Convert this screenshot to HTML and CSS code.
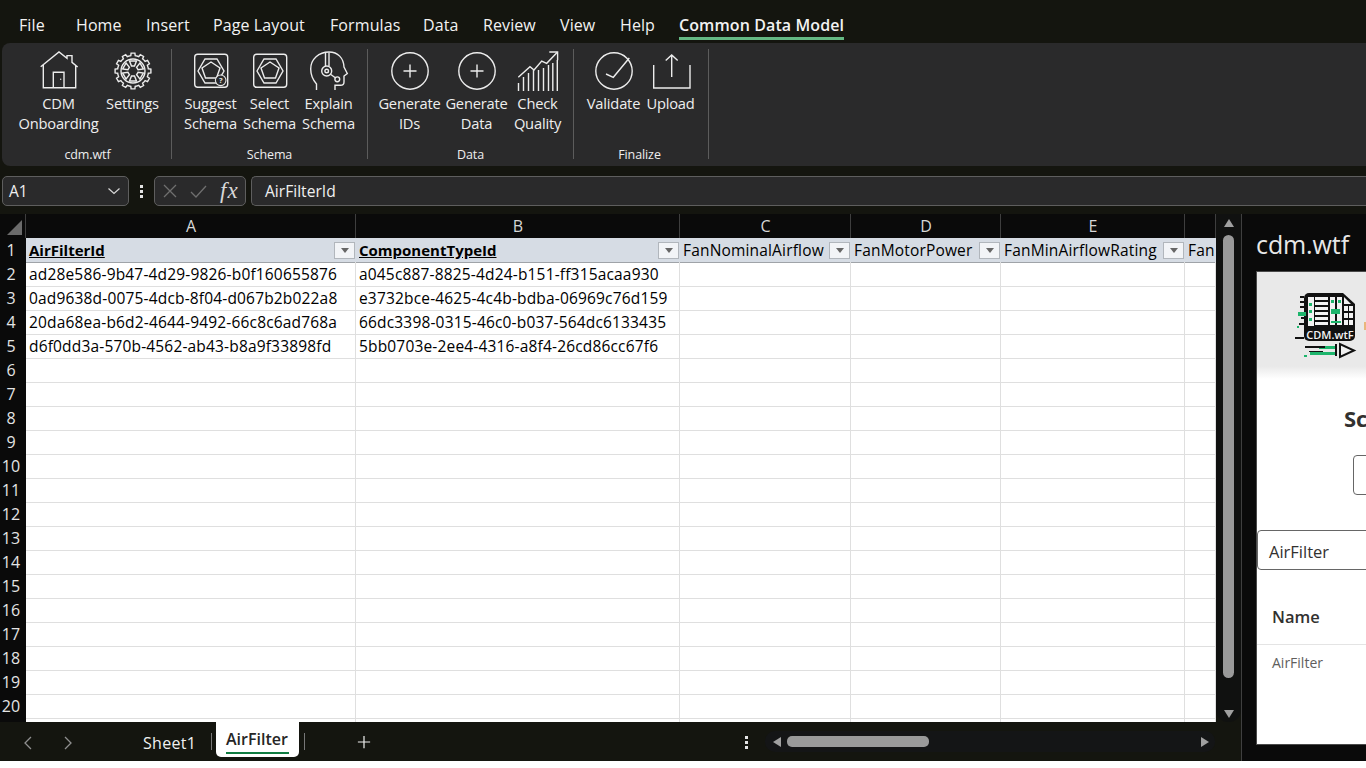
FILE: index.html
```html
<!DOCTYPE html>
<html lang="en">
<head>
<meta charset="utf-8">
<title>AirFilter - Excel</title>
<link rel="stylesheet" href="styles.css">
</head>
<body>
<div class="app">
  <nav class="tabs">
    <span class="tab t-file">File</span>
    <span class="tab t-home">Home</span>
    <span class="tab t-ins">Insert</span>
    <span class="tab t-pl">Page Layout</span>
    <span class="tab t-form">Formulas</span>
    <span class="tab t-data">Data</span>
    <span class="tab t-rev">Review</span>
    <span class="tab t-view">View</span>
    <span class="tab t-help">Help</span>
    <span class="tab active">Common Data Model</span>
  </nav>

  <section class="ribbon">
    <div class="group g1">
      <div class="btns">
        <div class="btn w90">
          <svg class="ico" viewBox="0 0 44 44"><path d="M3.7 16.7 22 2l8 6.4V5.6h5v6.8l5.7 4.6M6.3 15v22.7h32.4V15"/><path d="M16.3 37.7V22.3H27v15.4"/><circle class="dot" cx="23.7" cy="29.3" r=".7"/></svg>
          <span>CDM<br>Onboarding</span>
        </div>
        <div class="btn w58">
          <svg class="ico" viewBox="0 0 44 44">
            <defs>
              <path id="tooth" d="M18 6l1.8-.3.3-2.6h3.8l.3 2.6 1.8.3"/>
              <path id="wedge" d="M18.5 11h7l-2 5h-3z"/>
            </defs>
            <use href="#tooth"/><use href="#tooth" transform="rotate(30 22 21)"/><use href="#tooth" transform="rotate(60 22 21)"/><use href="#tooth" transform="rotate(90 22 21)"/><use href="#tooth" transform="rotate(120 22 21)"/><use href="#tooth" transform="rotate(150 22 21)"/><use href="#tooth" transform="rotate(180 22 21)"/><use href="#tooth" transform="rotate(210 22 21)"/><use href="#tooth" transform="rotate(240 22 21)"/><use href="#tooth" transform="rotate(270 22 21)"/><use href="#tooth" transform="rotate(300 22 21)"/><use href="#tooth" transform="rotate(330 22 21)"/>
            <circle cx="22" cy="21" r="12"/>
            <use href="#wedge"/><use href="#wedge" transform="rotate(60 22 21)"/><use href="#wedge" transform="rotate(120 22 21)"/><use href="#wedge" transform="rotate(180 22 21)"/><use href="#wedge" transform="rotate(240 22 21)"/><use href="#wedge" transform="rotate(300 22 21)"/>
          </svg>
          <span>Settings</span>
        </div>
      </div>
      <div class="glabel">cdm.wtf</div>
    </div>

    <div class="group g2">
      <div class="btns">
        <div class="btn w59">
          <svg class="ico" viewBox="0 0 44 44"><rect x="5.7" y="4.3" width="33" height="33" rx="3"/><path d="M9 21l7-12h12l7 12-7 12H16z"/><path d="M22 12l9 6-3.500 10h-11L13 18z"/><circle class="badge" cx="31.700" cy="30.300" r="5.300"/><text class="q" x="31.700" y="33.200">?</text></svg>
          <span>Suggest<br>Schema</span>
        </div>
        <div class="btn w59">
          <svg class="ico" viewBox="0 0 44 44"><rect x="5.700" y="4.300" width="33" height="33" rx="3"/><path d="M9 21l7-12h12l7 12-7 12H16z"/><path d="M22 12l9 6-3.500 10h-11L13 18z"/></svg>
          <span>Select<br>Schema</span>
        </div>
        <div class="btn w59">
          <svg class="ico" viewBox="0 0 44 44"><path d="M9.500 40v-6C6 30 3.700 25 3.700 19 3.700 9 12 2 22 2c9 0 14.500 6 15 15l3.300 6.500-3.300 2.500v6c0 2-1.500 3.300-3.500 3.300H28V40"/><path d="M18.500 2.500V16M22 2.500V16"/><circle cx="19.700" cy="21" r="5"/><circle cx="19.700" cy="21" r="1.800"/><path d="M23.500 24.300l4.800 3.400"/><circle cx="30.300" cy="29.300" r="2.400"/></svg>
          <span>Explain<br>Schema</span>
        </div>
      </div>
      <div class="glabel">Schema</div>
    </div>

    <div class="group g3">
      <div class="btns">
        <div class="btn w67">
          <svg class="ico" viewBox="0 0 44 44"><circle cx="22" cy="21" r="18.200"/><path d="M22 14.500v13M15.500 21h13"/></svg>
          <span>Generate<br>IDs</span>
        </div>
        <div class="btn w67">
          <svg class="ico" viewBox="0 0 44 44"><circle cx="22" cy="21" r="18.200"/><path d="M22 14.500v13M15.500 21h13"/></svg>
          <span>Generate<br>Data</span>
        </div>
        <div class="btn w55">
          <svg class="ico" viewBox="0 0 44 44"><path d="M2.500 41V33M7.500 41V27M12.500 41V23M17.500 41V20M22.500 41V20M27.500 41V18M32.500 41V15M36.800 41V13M41.300 41V10"/><path d="M2.300 27.300 14 16.700l4 3.300 7.700-9 5 2.300L41.300 2.300"/><path d="M33.300 2h8.300v8.300"/></svg>
          <span>Check<br>Quality</span>
        </div>
      </div>
      <div class="glabel">Data</div>
    </div>

    <div class="group g4">
      <div class="btns">
        <div class="btn w62">
          <svg class="ico" viewBox="0 0 44 44"><circle cx="22" cy="21" r="18.200"/><path d="M14 24l7.300 3.300L37.300 8"/></svg>
          <span>Validate</span>
        </div>
        <div class="btn w52">
          <svg class="ico" viewBox="0 0 44 44"><path d="M4.700 15v23h36.300V15"/><path d="M22.700 27V5.500M16.700 10.500l6-5.500 6 5.500"/></svg>
          <span>Upload</span>
        </div>
      </div>
      <div class="glabel">Finalize</div>
    </div>
  </section>

  <section class="fbar">
    <div class="namebox"><span>A1</span>
      <svg class="chev" viewBox="0 0 14 8"><path d="M1.500 1.500 7 6.500l5.500-5"/></svg>
    </div>
    <div class="vdots"><i></i><i></i><i></i></div>
    <div class="fxbox">
      <svg class="fxmark" viewBox="0 0 16 16"><path d="M2 2l12 12M14 2 2 14"/></svg>
      <svg class="fxmark" viewBox="0 0 18 16"><path d="M2 9l5 5L17 3"/></svg>
      <span class="fx">fx</span>
    </div>
    <div class="formula">AirFilterId</div>
  </section>

  <section class="workspace">
    <div class="sheetside">
      <div class="sheetrow">
        <div class="sheet">
          <div class="row colhead">
            <div class="corner"><i></i></div><div class="ch">A</div><div class="ch">B</div><div class="ch">C</div><div class="ch">D</div><div class="ch">E</div><div class="ch"></div>
          </div>
          <div class="row tbl">
            <div class="rh">1</div>
            <div class="c th b"><span>AirFilterId</span><i class="flt"></i></div>
            <div class="c th b"><span>ComponentTypeId</span><i class="flt"></i></div>
            <div class="c th"><span>FanNominalAirflow</span><i class="flt"></i></div>
            <div class="c th"><span>FanMotorPower</span><i class="flt"></i></div>
            <div class="c th"><span>FanMinAirflowRating</span><i class="flt"></i></div>
            <div class="c th"><span>Fan</span></div>
          </div>
          <div class="row"><div class="rh">2</div><div class="c">ad28e586-9b47-4d29-9826-b0f160655876</div><div class="c">a045c887-8825-4d24-b151-ff315acaa930</div><div class="c"></div><div class="c"></div><div class="c"></div><div class="c"></div></div>
          <div class="row"><div class="rh">3</div><div class="c">0ad9638d-0075-4dcb-8f04-d067b2b022a8</div><div class="c">e3732bce-4625-4c4b-bdba-06969c76d159</div><div class="c"></div><div class="c"></div><div class="c"></div><div class="c"></div></div>
          <div class="row"><div class="rh">4</div><div class="c">20da68ea-b6d2-4644-9492-66c8c6ad768a</div><div class="c">66dc3398-0315-46c0-b037-564dc6133435</div><div class="c"></div><div class="c"></div><div class="c"></div><div class="c"></div></div>
          <div class="row"><div class="rh">5</div><div class="c">d6f0dd3a-570b-4562-ab43-b8a9f33898fd</div><div class="c">5bb0703e-2ee4-4316-a8f4-26cd86cc67f6</div><div class="c"></div><div class="c"></div><div class="c"></div><div class="c"></div></div>
          <div class="row"><div class="rh">6</div><div class="c"></div><div class="c"></div><div class="c"></div><div class="c"></div><div class="c"></div><div class="c"></div></div>
          <div class="row"><div class="rh">7</div><div class="c"></div><div class="c"></div><div class="c"></div><div class="c"></div><div class="c"></div><div class="c"></div></div>
          <div class="row"><div class="rh">8</div><div class="c"></div><div class="c"></div><div class="c"></div><div class="c"></div><div class="c"></div><div class="c"></div></div>
          <div class="row"><div class="rh">9</div><div class="c"></div><div class="c"></div><div class="c"></div><div class="c"></div><div class="c"></div><div class="c"></div></div>
          <div class="row"><div class="rh">10</div><div class="c"></div><div class="c"></div><div class="c"></div><div class="c"></div><div class="c"></div><div class="c"></div></div>
          <div class="row"><div class="rh">11</div><div class="c"></div><div class="c"></div><div class="c"></div><div class="c"></div><div class="c"></div><div class="c"></div></div>
          <div class="row"><div class="rh">12</div><div class="c"></div><div class="c"></div><div class="c"></div><div class="c"></div><div class="c"></div><div class="c"></div></div>
          <div class="row"><div class="rh">13</div><div class="c"></div><div class="c"></div><div class="c"></div><div class="c"></div><div class="c"></div><div class="c"></div></div>
          <div class="row"><div class="rh">14</div><div class="c"></div><div class="c"></div><div class="c"></div><div class="c"></div><div class="c"></div><div class="c"></div></div>
          <div class="row"><div class="rh">15</div><div class="c"></div><div class="c"></div><div class="c"></div><div class="c"></div><div class="c"></div><div class="c"></div></div>
          <div class="row"><div class="rh">16</div><div class="c"></div><div class="c"></div><div class="c"></div><div class="c"></div><div class="c"></div><div class="c"></div></div>
          <div class="row"><div class="rh">17</div><div class="c"></div><div class="c"></div><div class="c"></div><div class="c"></div><div class="c"></div><div class="c"></div></div>
          <div class="row"><div class="rh">18</div><div class="c"></div><div class="c"></div><div class="c"></div><div class="c"></div><div class="c"></div><div class="c"></div></div>
          <div class="row"><div class="rh">19</div><div class="c"></div><div class="c"></div><div class="c"></div><div class="c"></div><div class="c"></div><div class="c"></div></div>
          <div class="row"><div class="rh">20</div><div class="c"></div><div class="c"></div><div class="c"></div><div class="c"></div><div class="c"></div><div class="c"></div></div>
          <div class="row"><div class="rh"></div><div class="c"></div><div class="c"></div><div class="c"></div><div class="c"></div><div class="c"></div><div class="c"></div></div>
        </div>
        <div class="vscroll">
          <i class="tri up"></i>
          <div class="vthumb"></div>
          <i class="tri down"></i>
        </div>
      </div>
      <div class="sheetbar">
        <div class="navs">
          <svg viewBox="0 0 10 16"><path d="M8 2 2 8l6 6"/></svg>
          <svg viewBox="0 0 10 16"><path d="M2 2l6 6-6 6"/></svg>
        </div>
        <span class="sheet1">Sheet1</span>
        <i class="sep"></i>
        <div class="curtab"><span>AirFilter</span></div>
        <i class="sep"></i>
        <svg class="plus" viewBox="0 0 16 16"><path d="M8 1v14M1 8h14"/></svg>
        <div class="vdots small"><i></i><i></i><i></i></div>
        <div class="hscroll">
          <i class="tri left"></i>
          <div class="hthumb"></div>
          <i class="tri right"></i>
        </div>
      </div>
    </div>

    <aside class="pane">
      <h1 class="pane-title">cdm.wtf</h1>
      <div class="card">
        <div class="card-head">
          <svg class="logo" viewBox="0 0 62 66">
            <path class="lg-dark" d="M14 0H48L60 11V43a5 5 0 0 1-5 5H14a5 5 0 0 1-5-5V5a5 5 0 0 1 5-5z"/>
            <g class="lg-white">
              <rect x="13" y="4" width="6" height="29"/><rect x="20" y="4" width="13" height="3"/><rect x="20" y="9" width="13" height="3"/><rect x="20" y="14" width="13" height="3"/><rect x="20" y="19" width="13" height="3"/><rect x="20" y="24" width="13" height="3"/><rect x="20" y="29" width="13" height="3"/>
              <rect x="35" y="4" width="5" height="28"/><rect x="42" y="4" width="5" height="28"/>
              <path d="M49 4l7 7h-7z"/>
              <rect x="49" y="13" width="4" height="5"/><rect x="54" y="13" width="4" height="5"/><rect x="49" y="20" width="4" height="5"/><rect x="54" y="20" width="4" height="5"/><rect x="49" y="27" width="4" height="5"/><rect x="54" y="27" width="4" height="5"/>
            </g>
            <g class="lg-green">
              <rect x="14" y="10" width="3" height="3"/><rect x="14" y="17" width="3" height="3"/><rect x="14" y="25" width="3" height="3"/><rect x="36" y="7" width="3" height="3"/><rect x="43" y="7" width="3" height="3"/><rect x="36" y="16" width="9" height="5"/><rect x="36" y="28" width="10" height="2"/>
              <rect x="3" y="19" width="8" height="4"/><rect x="2" y="33" width="2" height="2"/><rect x="24" y="53" width="17" height="3"/><rect x="15" y="59" width="26" height="3"/><rect x="9" y="62" width="3" height="2"/>
            </g>
            <g class="lg-black">
              <rect x="5" y="3" width="4" height="2"/><rect x="5" y="8" width="4" height="2"/><rect x="5" y="13" width="4" height="2"/><rect x="6" y="24" width="3" height="2"/><rect x="4" y="30" width="5" height="2"/><rect x="0" y="44" width="9" height="2"/><rect x="10" y="53" width="20" height="2"/><rect x="14" y="58" width="14" height="1"/>
            </g>
            <path class="lg-pen" d="M41 51v12M45 51v13l14-6.500z"/>
            <text class="lg-text" x="35" y="45.500">CDM.wtF</text>
          </svg>
          <i class="spot"></i>
        </div>
        <h2 class="card-h">Schema</h2>
        <div class="search"></div>
        <div class="combo">AirFilter</div>
        <div class="thead">Name</div>
        <div class="tcell">AirFilter</div>
      </div>
    </aside>
  </section>
</div>
</body>
</html>
```
FILE: styles.css
```css
* { box-sizing: border-box; }
html, body { margin: 0; padding: 0; background: #fff; }
body { font-family: "Open Sans", "Noto Sans", "Liberation Sans", sans-serif; overflow: hidden; }
i { display: block; }

.app { width: 1366px; height: 761px; background: #14150f; display: flex; flex-direction: column; overflow: hidden; }

/* ribbon tabs */
.tabs { height: 43px; display: flex; align-items: flex-start; padding: 15px 0 0 19px; color: #f2f2f2; font-size: 16px; letter-spacing: .1px; line-height: 20px; flex: none; }
.tab { display: block; white-space: nowrap; }
.t-file { width: 57px; }
.t-home { width: 70px; }
.t-ins { width: 67px; }
.t-pl { width: 117px; }
.t-form { width: 93px; }
.t-data { width: 60px; }
.t-rev { width: 77px; }
.t-view { width: 60px; }
.t-help { width: 59px; }
.tab.active { font-weight: 600; height: 25px; border-bottom: 3px solid #64b883; }

.ribbon { height: 123px; margin-left: 2px; background: #2a2a2b; border-radius: 8px 0 0 8px; display: flex; flex: none; padding-top: 6px; }
.group { height: 110px; border-right: 1px solid #5c5c5c; display: flex; flex-direction: column; align-items: center; position: relative; }
.g1 { width: 170px; padding-left: 2px; }
.g2 { width: 196px; }
.g3 { width: 206px; }
.g4 { width: 135px; padding-right: 3px; }
.btns { display: flex; flex: 1; justify-content: center; }
.btn { display: flex; flex-direction: column; align-items: center; color: #eee; font-size: 14.700px; letter-spacing: -.2px; line-height: 20px; text-align: center; white-space: nowrap; }
.w90 { width: 90px; }
.w58 { width: 58px; }
.w59 { width: 59px; }
.w67 { width: 67px; }
.w55 { width: 55px; }
.w62 { width: 62px; }
.w52 { width: 52px; }
.ico { width: 44px; height: 44px; margin: 1px 0 0; flex: none; fill: none; stroke: #ececec; stroke-width: 1.400; display: block; }
.btn span { display: block; margin-top: -1px; }
.ico .dot { fill: #e6e6e6; stroke: none; }
.ico .badge { fill: #2a2a2b; stroke: #e6e6e6; stroke-width: 1.100; }
.ico .q { font-size: 7.500px; font-family: "Open Sans", sans-serif; font-weight: 700; fill: #e6e6e6; stroke: none; text-anchor: middle; }
.glabel { color: #eee; font-size: 12.500px; line-height: 16px; height: 16px; margin-bottom: -4px; flex: none; letter-spacing: -.1px; }

/* formula bar */
.fbar { height: 30px; margin-top: 10px; display: flex; align-items: stretch; flex: none; padding-left: 2px; color: #f0f0f0; font-size: 15.500px; }
.namebox { width: 127px; background: #2a2a2b; border: 1px solid #5e5e5e; border-radius: 5px; display: flex; align-items: center; justify-content: space-between; padding: 0 7px 0 6px; }
.chev { width: 14px; height: 8px; fill: none; stroke: #d8d8d8; stroke-width: 1.200; }
.vdots { width: 25px; display: flex; flex-direction: column; align-items: center; justify-content: center; gap: 2px; }
.vdots i { width: 3px; height: 3px; background: #e4e4e4; }
.fxbox { width: 92px; background: #2a2a2b; border: 1px solid #5e5e5e; border-radius: 5px; display: flex; align-items: center; gap: 9px; padding-left: 7px; }
.fxmark { width: 16px; height: 16px; fill: none; stroke: #6f6f6f; stroke-width: 1.300; flex: none; }
.fxmark + .fxmark { width: 22px; }
.fx { font-family: "Liberation Serif", serif; font-style: italic; font-weight: 400; font-size: 23px; color: #d8d8d8; margin-left: 2px; letter-spacing: 1px; }
.formula { flex: 1; margin-left: 5px; background: #2a2a2b; border: 1px solid #5e5e5e; border-right: 0; border-radius: 5px 0 0 5px; padding-left: 13px; line-height: 28px; font-size: 15.600px; }

/* sheet */
.workspace { flex: 1; margin-top: 8px; display: flex; min-height: 0; }
.sheetside { width: 1241px; display: flex; flex-direction: column; flex: none; }
.sheetrow { height: 508px; display: flex; flex: none; }
.sheet { width: 1216px; overflow: hidden; background: #fff; font-size: 15.500px; letter-spacing: .17px; color: #000; }
.row { display: grid; grid-template-columns: 26px 330px 324px 171px 150px 184px 31px; height: 24px; }
.colhead { background: #0a0a0a; color: #d7d7d7; font-size: 16px; letter-spacing: 0; }
.corner { border-right: 1px solid #3e3e3e; position: relative; }
.corner i { width: 0; height: 0; border-style: solid; border-width: 0 0 15px 15px; border-color: transparent transparent #6b6b6b transparent; margin: 6px 0 0 7px; }
.ch { border-right: 1px solid #3e3e3e; text-align: center; line-height: 24px; padding-left: 1px; }
.rh { background: #0a0a0a; color: #e4e4e4; font-size: 16px; letter-spacing: 0; line-height: 24px; text-align: center; border-bottom: 1px solid #3e3e3e; padding-right: 4px; }
.c { border-right: 1px solid #dfdfdf; border-bottom: 1px solid #dfdfdf; padding-left: 3px; line-height: 24px; white-space: nowrap; overflow: hidden; }
.tbl .c { border-bottom: 1px solid #9fa3a8; }
.th { background: #d6dce4; border-right: 0 !important; display: flex; align-items: center; justify-content: space-between; padding-right: 1px; }
.th.b { font-weight: 700; font-size: 15px; letter-spacing: 0; text-decoration: underline; }
.flt { width: 21px; height: 17px; background: #f2f4f7 ; border: 1px solid #b1b6bc; position: relative; flex: none; }
.flt::after { content: ""; position: absolute; left: 6px; top: 5px; border-style: solid; border-width: 5px 4px 0; border-color: #666 transparent transparent; }

.vscroll { width: 25px; background: #101110; display: flex; flex-direction: column; align-items: center; padding: 4px 0 0; border-radius: 0 0 12px 12px; position: relative; }
.vthumb { width: 11px; height: 443px; margin-top: 8px; background: #9a9a9a; border-radius: 6px; }
.tri { width: 0; height: 0; border-style: solid; flex: none; }
.tri.up { margin-top: 1px; border-width: 0 5.500px 8px; border-color: transparent transparent #a0a0a0; }
.tri.down { margin-top: 32px; border-width: 8px 5.500px 0; border-color: #a0a0a0 transparent transparent; }

.sheetbar { flex: 1; position: relative; display: flex; align-items: flex-start; color: #f0f0f0; }
.navs { width: 143px; display: flex; gap: 30px; padding: 13px 0 0 23px; flex: none; }
.navs svg { width: 10px; height: 16px; fill: none; stroke: #8f8f8f; stroke-width: 1.300; }
.sheet1 { width: 68px; font-size: 16px; letter-spacing: .3px; line-height: 42px; flex: none; }
.sep { width: 1px; height: 17px; background: #777; margin-top: 11px; flex: none; }
.curtab { width: 83px; height: 35px; margin-left: 4px; background: #fff; border-radius: 0 0 5px 5px; flex: none; padding: 4px 10px 0; margin-right: 5px; }
.curtab span { display: block; color: #262626; font-size: 16px; font-weight: 600; line-height: 27px; border-bottom: 2px solid #107c41; height: 28px; white-space: nowrap; }
.plus { width: 14px; height: 14px; margin: 13px 0 0 52px; fill: none; stroke: #ededed; stroke-width: 1.400; flex: none; }
.vdots.small { width: 6px; margin: 14px 0 0 372px; gap: 2px; flex: none; }
.hscroll { width: 450px; height: 21px; margin: 9px 0 0 16px; background: #141516; border-radius: 10px; display: flex; align-items: center; flex: none; padding: 0 6px; }
.hthumb { width: 142px; height: 11px; background: #9a9a9a; border-radius: 5px; margin-left: 6px; }
.tri.left { margin-left: 2px; border-width: 5.500px 8px 5.500px 0; border-color: transparent #a0a0a0 transparent transparent; }
.tri.right { margin-left: auto; border-width: 5.500px 0 5.500px 8px; border-color: transparent transparent transparent #a0a0a0; }

/* task pane */
.pane { flex: 1; min-width: 0; background: #0a0a0a; border-left: 1px solid #3f3f3f; padding: 14px 0 16px 14px; display: flex; flex-direction: column; overflow: hidden; }
.pane-title { margin: 0 0 10px 0; font-size: 25px; font-weight: 400; line-height: 33px; height: 33px; color: #e8e8e8; flex: none; letter-spacing: -.1px; }
.card { flex: 1; width: 200px; background: #fff; border: 1px solid #4a4a4a; border-right: 0; position: relative; overflow: hidden; }
.card-head { height: 107px; background: linear-gradient(#e9e9e9 0, #e9e9e9 88%, #fff 100%); position: relative; overflow: hidden; }
.logo { width: 62px; height: 66px; position: absolute; left: 38px; top: 21px; }
.lg-dark { fill: #111; }
.lg-white { fill: #f2f2f2; }
.lg-green { fill: #1db56c; }
.lg-black { fill: #111; }
.lg-pen { fill: #f0f0f0; stroke: #111; stroke-width: 2; }
.lg-text { fill: #f4f4f4; font-family: "Open Sans", sans-serif; font-size: 11px; font-weight: 600; text-anchor: middle; }
.spot { position: absolute; left: 107px; top: 50px; width: 2px; height: 8px; background: #e9b67c; }
.card-h { margin: 24px 0 0 87px; font-size: 22px; font-weight: 700; color: #323130; line-height: 30px; white-space: nowrap; }
.search { margin: 22px 0 0 96px; width: 200px; height: 40px; border: 1px solid #666; border-radius: 4px; }
.combo { height: 40px; width: 200px; margin-top: 35px; border: 1px solid #666; border-radius: 4px; padding-left: 11px; line-height: 41px; font-size: 16.500px; color: #323130; }
.thead { height: 75px; border-bottom: 1px solid #e4e4e4; padding: 35px 0 0 15px; font-size: 16.500px; font-weight: 600; color: #323130; line-height: 24px; }
.tcell { padding: 9px 0 0 15px; font-size: 14px; color: #605e5c; line-height: 18px; }
```
